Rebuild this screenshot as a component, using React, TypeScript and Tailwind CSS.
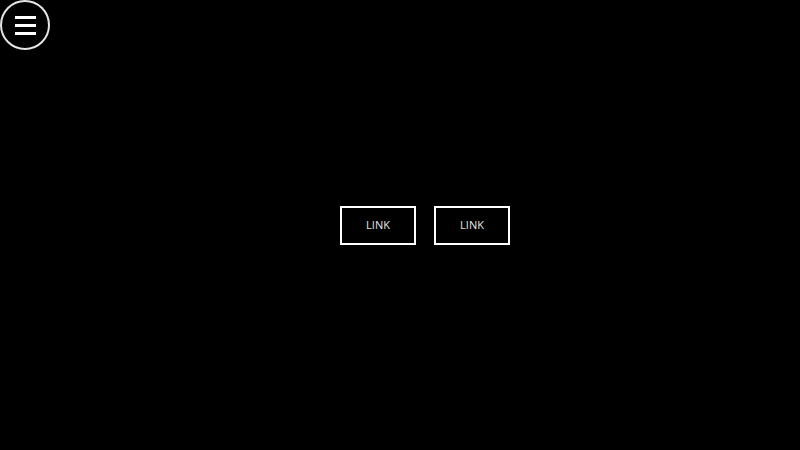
export default function App() {
  return (
    <div
      className="relative flex h-[450px] w-[800px] items-center justify-center bg-black pl-[50px] text-white"
      style={{ fontFamily: '"Open Sans", "Liberation Sans", sans-serif' }}
    >
      <button className="absolute left-0 top-0 flex h-[50px] w-[50px] flex-col items-center justify-center gap-[5px] rounded-full border-2 border-[#e5e5e5]">
        <span className="block h-[3px] w-[21px] bg-white" />
        <span className="block h-[3px] w-[21px] bg-white" />
        <span className="block h-[3px] w-[21px] bg-white" />
      </button>
      <div className="flex gap-[18px]">
        <a className="flex h-[39px] w-[76px] items-center justify-center border-2 border-white text-[11px] font-normal text-[#e6e6e6]">
          LINK
        </a>
        <a className="flex h-[39px] w-[76px] items-center justify-center border-2 border-white text-[11px] font-normal text-[#e6e6e6]">
          LINK
        </a>
      </div>
    </div>
  );
}
